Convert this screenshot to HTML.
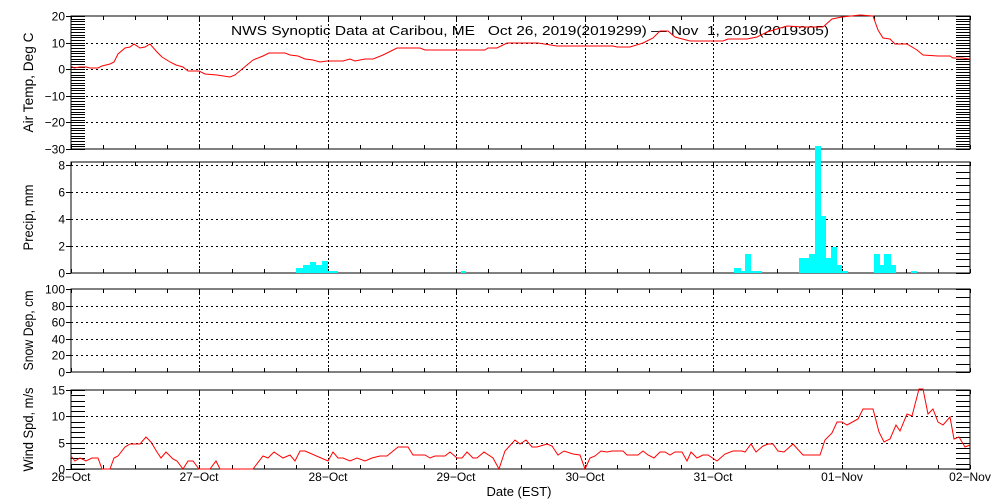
<!DOCTYPE html>
<html><head><meta charset="utf-8"><style>
html,body{margin:0;padding:0;background:#fff;width:1000px;height:500px;overflow:hidden}
svg{display:block}
text{font-family:"Liberation Sans",sans-serif;font-size:12px;fill:#000}
.ti{white-space:pre;font-size:13px}
.yt{font-size:13.5px}
</style></head><body>
<svg id="s" width="1000" height="500" viewBox="0 0 1000 500" xmlns="http://www.w3.org/2000/svg" shape-rendering="crispEdges">
<g id="g"></g>
<text class="ti" x="231" y="35" xml:space="preserve" textLength="598" lengthAdjust="spacingAndGlyphs">NWS Synoptic Data at Caribou, ME   Oct 26, 2019(2019299) — Nov  1, 2019(2019305)</text>
<g fill="#00ffff">
<rect x="296" y="268" width="7" height="5"/><rect x="303" y="265" width="7" height="8"/><rect x="310" y="262" width="6" height="11"/><rect x="316" y="265" width="6" height="8"/><rect x="322" y="261" width="6" height="12"/><rect x="328" y="271" width="10" height="2"/>
<rect x="461" y="271" width="5" height="2"/>
<rect x="734" y="268" width="7" height="5"/><rect x="741" y="271" width="4" height="2"/><rect x="745" y="254" width="6" height="19"/><rect x="751" y="271" width="11" height="2"/>
<rect x="799" y="258" width="10" height="15"/><rect x="809" y="254" width="6" height="19"/><rect x="815" y="146" width="6" height="127"/><rect x="821" y="216" width="5" height="57"/><rect x="826" y="258" width="5" height="15"/><rect x="831" y="247" width="6" height="26"/><rect x="837" y="265" width="5" height="8"/><rect x="842" y="271" width="6" height="2"/>
<rect x="874" y="254" width="6" height="19"/><rect x="880" y="265" width="4" height="8"/><rect x="884" y="254" width="7" height="19"/><rect x="891" y="265" width="5" height="8"/><rect x="911" y="271" width="6" height="2"/>
</g>
<g fill="none" stroke="#f00" stroke-width="1" shape-rendering="auto">
<polyline points="71,66 74,68 80,67 86,67 90,68 98,68 102,66 110,64 114,62 118,54 125,48 130,47 134,44 140,48 145,47 150,44 157,52 162,57 170,62 176,65 183,67 188,71 199,71 205,74 217,75 230,77 235,75 247,65 253,60 263,56 269,53 285,53 290,55 298,56 305,59 313,60 320,62 327,61 343,61 350,59 355,61 365,59 373,59 383,55 397,48 420,48 425,50 485,50 488,48 497,48 507,43 538,43 557,46 613,46 617,47 630,47 643,43 653,38 660,31 668,31 675,37 690,41 723,41 728,39 747,39 757,37 767,32 787,26 803,27 823,27 832,19 842,17 860,15 873,16 878,30 883,38 890,39 895,44 907,44 917,50 923,55 938,56 950,56 953,58 962,58 970,59"/>
<polyline points="71,456 75,461 80,458 86,461 92,458 98,458 102,469 110,469 114,458 118,456 125,447 130,444 140,444 146,437 151,442 157,452 161,458 166,452 173,459 177,461 183,469 188,461 193,461 199,469 210,469 216,461 220,469 253,469 263,456 268,458 274,452 283,458 290,455 295,461 300,451 305,451 328,461 333,452 338,458 343,458 350,461 357,458 365,461 372,458 380,456 387,456 398,447 408,447 413,455 425,455 430,458 435,456 445,456 450,452 457,458 462,458 467,452 473,458 477,458 484,452 493,458 499,469 505,451 515,440 520,444 526,440 532,447 537,447 547,444 552,446 558,455 564,451 573,454 580,455 585,469 590,458 595,456 601,451 607,452 612,451 623,451 627,455 638,455 643,451 648,455 654,458 660,452 665,452 670,455 675,452 682,452 687,461 691,452 697,458 703,455 708,455 717,461 725,454 733,451 742,451 745,452 751,444 756,452 763,446 768,444 773,444 778,451 784,452 793,444 803,455 820,455 825,440 832,433 837,422 842,422 847,425 858,419 863,409 873,409 879,432 884,442 890,439 896,425 900,431 907,414 912,416 919,389 923,389 928,414 933,409 938,422 943,425 950,417 954,439 959,437 965,447 970,445"/>
</g>
<text x="519" y="496" text-anchor="middle" style="font-size:13px">Date (EST)</text>
</svg>
<script>
(function(){
var g=document.getElementById('g'),h='';
var X0=71,X1=970,D=(X1-X0)/7;
function L(x1,y1,x2,y2,extra){h+='<line x1="'+x1+'" y1="'+y1+'" x2="'+x2+'" y2="'+y2+'" stroke="#000" '+(extra||'')+'/>';}
function T(x,y,s,a){h+='<text x="'+x+'" y="'+y+'" text-anchor="'+(a||'end')+'">'+s+'</text>';}
var panels=[
 {t:16,b:149,min:-30,max:20,maj:10,minor:1,left:true,right:true,lab:'Air Temp, Deg C',len:100},
 {t:162,b:273,min:0,max:8.22,maj:2,minor:0.5,left:false,right:true,lab:'Precip, mm',labmax:8,len:66},
 {t:289,b:372,min:0,max:100,maj:20,minor:10,left:false,right:true,lab:'Snow Dep, cm',len:80},
 {t:390,b:469,min:0,max:15,maj:5,minor:1,left:true,right:true,lab:'Wind Spd, m/s',len:84}];
panels.forEach(function(p,i){
 var Y=function(v){return p.b-(v-p.min)/(p.max-p.min)*(p.b-p.t);};
 h+='<rect x="'+X0+'" y="'+p.t+'" width="'+(X1-X0)+'" height="'+(p.b-p.t)+'" fill="none" stroke="#000"/>';
 for(var d=1;d<7;d++){var x=Math.round(X0+d*D)+.5;L(x,p.t,x,p.b,'stroke-dasharray="2,2"');}
 for(var q=0;q<=28;q++){var x=Math.round(X0+q*D/4)+.5;L(x,p.t,x,p.t+4);L(x,p.b,x,p.b-4);}
 var lm=p.labmax!==undefined?p.labmax:p.max;
 for(var v=p.min;v<=lm+1e-6;v+=p.maj){var y=Math.round(Y(v))+.5;
  if(v>p.min&&v<p.max)L(X0,y,X1,y,'stroke-dasharray="2,3"');
  L(X0-5,y,X0,y);T(X0-6,y+4,(v<0?'\u2212'+(-v):v));}
 for(var v=p.min;v<=p.max+1e-6;v+=p.minor){var y=Math.round(Y(v))+.5;
  if(p.left)L(X0,y,X0+14,y);if(p.right)L(X1-14,y,X1,y);}
 var cy=(p.t+p.b)/2;
 h+='<text class="yt" x="0" y="0" text-anchor="middle" textLength="'+p.len+'" lengthAdjust="spacingAndGlyphs" transform="translate(33,'+cy+') rotate(-90)">'+p.lab+'</text>';
});
var days=['26\u2212Oct','27\u2212Oct','28\u2212Oct','29\u2212Oct','30\u2212Oct','31\u2212Oct','01\u2212Nov','02\u2212Nov'];
days.forEach(function(s,i){T(Math.round(X0+i*D),481,s,'middle');});
g.innerHTML=h;
})();
</script>
</body></html>
